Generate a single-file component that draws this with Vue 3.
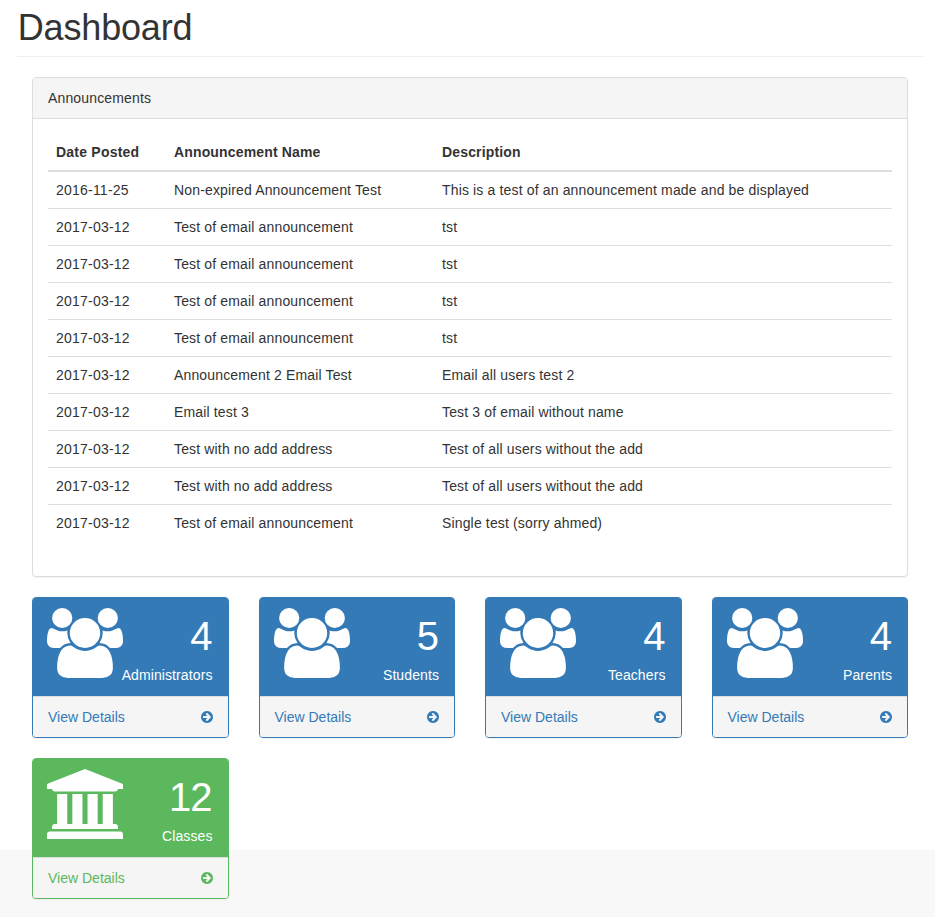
<script setup>
const announcements = [
  ['2016-11-25', 'Non-expired Announcement Test', 'This is a test of an announcement made and be displayed'],
  ['2017-03-12', 'Test of email announcement', 'tst'],
  ['2017-03-12', 'Test of email announcement', 'tst'],
  ['2017-03-12', 'Test of email announcement', 'tst'],
  ['2017-03-12', 'Test of email announcement', 'tst'],
  ['2017-03-12', 'Announcement 2 Email Test', 'Email all users test 2'],
  ['2017-03-12', 'Email test 3', 'Test 3 of email without name'],
  ['2017-03-12', 'Test with no add address', 'Test of all users without the add'],
  ['2017-03-12', 'Test with no add address', 'Test of all users without the add'],
  ['2017-03-12', 'Test of email announcement', 'Single test (sorry ahmed)'],
]

const cards = [
  { label: 'Administrators', count: 4, icon: 'users', tone: 'primary' },
  { label: 'Students', count: 5, icon: 'users', tone: 'primary' },
  { label: 'Teachers', count: 4, icon: 'users', tone: 'primary' },
  { label: 'Parents', count: 4, icon: 'users', tone: 'primary' },
  { label: 'Classes', count: 12, icon: 'bank', tone: 'green' },
]

const icons = {
  users:
    'M593 896q-162 5-265 128H194q-82 0-138-40.5T0 865q0-353 124-353 6 0 43.5 21t97.5 42.5T384 597q67 0 133-23-5 37-5 66 0 139 81 256zm1071 637q0 120-73 189.5t-194 69.5H523q-121 0-194-69.5T256 1533q0-53 3.5-103.5t14-109T300 1212t43-97.5 62-81 85.5-53.5T602 960q10 0 43 21.5t73 48 107 48 135 21.5 135-21.5 107-48 73-48 43-21.5q61 0 111.5 20t85.5 53.5 62 81 43 97.5 26.5 108.5 14 109 3.5 103.5zM640 256q0 106-75 181t-181 75-181-75-75-181 75-181T384 0t181 75 75 181zm704 384q0 159-112.5 271.5T960 1024 688.5 911.5 576 640t112.5-271.5T960 256t271.5 112.5T1344 640zm576 225q0 78-56 118.5t-138 40.5h-134q-103-123-265-128 81-117 81-256 0-29-5-66 66 23 133 23 59 0 119-21.5t97.5-42.5 43.5-21q124 0 124 353zm-128-609q0 106-75 181t-181 75-181-75-75-181 75-181 181-75 181 75 75 181z',
  bank:
    'M960 0l960 384v128h-128q0 26-20.5 45t-48.5 19H197q-28 0-48.5-19T128 512H0V384zM256 640h256v768h128V640h256v768h128V640h256v768h128V640h256v768h59q28 0 48.5 19t20.5 45v64H128v-64q0-26 20.5-45t48.5-19h59V640zm1595 960q28 0 48.5 19t20.5 45v128H0v-128q0-26 20.5-45t48.5-19h1782z',
}
</script>

<template>
  <div class="page">
    <div class="wrapper">
      <h1 class="page-header">Dashboard</h1>
      <main class="content">
        <section class="panel">
          <div class="panel-heading">Announcements</div>
          <div class="panel-body">
            <div class="row head">
              <span>Date Posted</span>
              <span>Announcement Name</span>
              <span>Description</span>
            </div>
            <div v-for="(row, i) in announcements" :key="i" class="row">
              <span v-for="(cell, j) in row" :key="j">{{ cell }}</span>
            </div>
          </div>
        </section>
        <section class="cards">
          <article v-for="card in cards" :key="card.label" class="card" :class="card.tone">
            <div class="card-top">
              <svg class="card-icon" viewBox="0 0 1920 1792" preserveAspectRatio="none">
                <path :d="icons[card.icon]" />
              </svg>
              <div class="figures">
                <div class="count">{{ card.count }}</div>
                <div class="label">{{ card.label }}</div>
              </div>
            </div>
            <a class="card-footer">
              <span>View Details</span>
              <svg class="arrow" viewBox="128 128 1536 1536">
                <path
                  d="M1413 896q0-27-18-45l-91-91-362-362q-18-18-45-18t-45 18l-91 91q-18 18-18 45t18 45l189 189h-502q-26 0-45 19t-19 45v128q0 26 19 45t45 19h502l-189 189q-19 19-19 45t19 45l91 91q18 18 45 18t45-18l362-362 91-91q18-18 18-45zm251 0q0 209-103 385.5t-279.5 279.5-385.5 103-385.5-103-279.5-279.5-103-385.5 103-385.5 279.5-279.5 385.5-103 385.5 103 279.5 279.5 103 385.5z"
                />
              </svg>
            </a>
          </article>
        </section>
      </main>
    </div>
  </div>
</template>

<style>
body {
  background: #f8f8f8;
}
</style>

<style scoped>
.page,
.page * {
  box-sizing: border-box;
}
.page {
  height: 917px;
  background: #f8f8f8;
}
.wrapper {
  height: 850px;
  padding: 8px 12px 0 17px;
  background: #fff;
  color: #333;
  font: 14px/20px 'Liberation Sans', Arial, sans-serif;
}
.page-header {
  height: 49px;
  margin: 0 0 20px;
  border-bottom: 1px solid #eee;
  font-size: 36px;
  font-weight: 400;
  line-height: 39px;
  letter-spacing: -0.15px;
  text-indent: 0.7px;
}
.content {
  padding: 0 15px;
}
.panel {
  margin-bottom: 20px;
  border: 1px solid #ddd;
  border-radius: 4px;
  background: #fff;
  box-shadow: 0 1px 1px rgba(0, 0, 0, 0.05);
  letter-spacing: 0.15px;
}
.panel-heading {
  padding: 10px 15px;
  border-bottom: 1px solid #ddd;
  border-radius: 3px 3px 0 0;
  background: #f5f5f5;
}
.panel-body {
  padding: 15px 15px 35px;
}
.row {
  display: grid;
  grid-template-columns: 118px 268px 1fr;
  border-top: 1px solid #ddd;
}
.row span {
  padding: 8px;
  white-space: nowrap;
}
.row span:first-child {
  letter-spacing: 0.22px;
}
.row.head {
  border-top: 0;
  border-bottom: 2px solid #ddd;
  font-weight: 700;
}
.row.head + .row {
  border-top: 0;
}
.cards {
  display: grid;
  grid-template-columns: repeat(4, 1fr);
  gap: 20px 30px;
}
.card {
  --tone: #337ab7;
  border: 1px solid var(--tone);
  border-radius: 4px;
  background: #fff;
  box-shadow: 0 1px 1px rgba(0, 0, 0, 0.05);
}
.card.green {
  --tone: #5cb85c;
}
.card-top {
  display: flex;
  justify-content: space-between;
  height: 98px;
  padding: 10px 15px;
  background: var(--tone);
  border-radius: 2px 2px 0 0;
  color: #fff;
}
.card-icon {
  flex: none;
  width: 76px;
  height: 70px;
  margin-left: -0.7px;
  fill: #fff;
}
.figures {
  display: flex;
  flex-direction: column;
  align-items: flex-end;
  width: 0;
  flex: 1;
}
.count {
  margin-right: 1px;
  font-size: 40px;
  line-height: 57px;
  letter-spacing: -1px;
}
.label {
  white-space: nowrap;
  letter-spacing: 0.1px;
}
.card-footer {
  display: flex;
  align-items: center;
  justify-content: space-between;
  padding: 10px 15px;
  border-top: 1px solid #ddd;
  border-radius: 0 0 3px 3px;
  background: #f5f5f5;
  color: var(--tone);
}
.arrow {
  width: 12px;
  height: 12px;
  fill: var(--tone);
}
</style>
